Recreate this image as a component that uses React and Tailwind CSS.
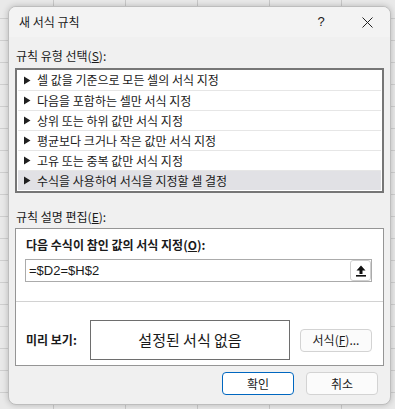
import React from "react";

const KR = { fontFamily: '"Noto Sans CJK KR", "Noto Sans", sans-serif' };

const rows = [
  "셀 값을 기준으로 모든 셀의 서식 지정",
  "다음을 포함하는 셀만 서식 지정",
  "상위 또는 하위 값만 서식 지정",
  "평균보다 크거나 작은 값만 서식 지정",
  "고유 또는 중복 값만 서식 지정",
  "수식을 사용하여 서식을 지정할 셀 결정",
];

function Tri() {
  return (
    <svg width="8" height="9" viewBox="0 0 8 9" className="shrink-0">
      <polygon points="1,0.5 7.5,4.5 1,8.5" fill="#1f1f1f" />
    </svg>
  );
}

export default function App() {
  return (
    <div
      className="w-[395px] h-[409px] overflow-hidden bg-[#e9e9e9] bg-[linear-gradient(to_right,#c9c9c9_1px,transparent_1px),linear-gradient(to_bottom,#cfcfcf_1px,transparent_1px)] bg-[size:72px_22px] bg-[position:53px_18px] pt-[6px] pl-[8px]"
      style={KR}
    >
      <div className="w-[383px] h-[399px] rounded-[8px] border border-[#bdbdbd] bg-[#f0f0f0] shadow-[0_0_6px_rgba(0,0,0,0.22)] flex flex-col overflow-hidden text-[#1a1a1a]">
        {/* title bar */}
        <div className="h-[30px] shrink-0 flex items-center bg-[#f3f3f3]">
          <div className="flex-1 pl-[10px] text-[12px] leading-[16px]">새 서식 규칙</div>
          <div className="w-[46px] flex justify-center text-[13px] leading-[16px] font-bold" style={{ fontFamily: '"Liberation Sans", sans-serif', fontWeight: 400 }}>?</div>
          <div className="w-[46px] flex justify-center">
            <svg width="11" height="11" viewBox="0 0 11 11">
              <path d="M0.5 0.5 L10.5 10.5 M10.5 0.5 L0.5 10.5" stroke="#222" strokeWidth="1" />
            </svg>
          </div>
        </div>

        {/* body */}
        <div className="flex flex-col px-[6px]">
          <div className="mt-[11px] pl-[1px] text-[12px] leading-[16px]">
            규칙 유형 선택(<span className="underline">S</span>):
          </div>
          <div className="mt-[4px] border-2 border-[#767676] bg-white px-[1px] pb-[1px] flex flex-col">
            {rows.map((r, i) => (
              <div
                key={i}
                className={
                  "h-[20px] flex items-center gap-[6px] pl-[5px] text-[12px] leading-[16px] " +
                  (i > 0 ? "border-t border-[#e6e6e6] " : "") +
                  (i === 5 ? "bg-[#e1e1e5]" : "")
                }
              >
                <Tri />
                <span>{r}</span>
              </div>
            ))}
          </div>

          <div className="mt-[16px] pl-[1px] text-[12px] leading-[16px]">
            규칙 설명 편집(<span className="underline">E</span>):
          </div>
          <div className="mt-[3px] border border-[#959595] bg-white flex flex-col pb-[5px]">
            <div className="pt-[8px] pl-[10px] text-[12px] leading-[16px] font-bold">
              다음 수식이 참인 값의 서식 지정(<span className="underline">O</span>):
            </div>
            <div className="mt-[6px] ml-[9px] mr-[11px] h-[23px] border border-[#ababab] flex items-center justify-between pl-[3px] pr-[0px]">
              <span className="text-[13px] leading-[16px]" style={{ fontFamily: '"Liberation Sans", sans-serif' }}>
                =$D2=$H$2
              </span>
              <div className="w-[21px] h-[21px] rounded-[3px] border border-[#cfcfcf] bg-white flex items-center justify-center">
                <svg width="10" height="12" viewBox="0 0 10 12">
                  <path d="M5 0.5 L9.5 5.5 H6.5 V9 H3.5 V5.5 H0.5 Z" fill="#111" />
                  <rect x="0" y="10" width="10" height="1.6" fill="#111" />
                </svg>
              </div>
            </div>
            <div className="mt-[19px] h-px bg-[#d2d2d2]" />
            <div className="mt-[18px] flex items-center">
              <div className="w-[74px] pl-[10px] text-[12px] leading-[16px] font-bold">미리 보기:</div>
              <div className="w-[200px] h-[40px] border border-[#6e6e6e] flex items-center justify-center text-[15px] leading-[20px]">
                설정된 서식 없음
              </div>
              <div className="ml-[10px] w-[72px] h-[23px] rounded-[4px] border border-[#d3d3d3] bg-[#fbfbfb] flex items-center justify-center text-[12px] leading-[16px]">
                서식(<span className="underline">F</span>)...
              </div>
            </div>
          </div>

          <div className="mt-[6px] flex justify-end gap-[12px] pr-[6px]">
            <div className="w-[72px] h-[23px] rounded-[4px] border-[1.5px] border-[#0067c0] bg-white flex items-center justify-center text-[12px] leading-[16px]">
              확인
            </div>
            <div className="w-[72px] h-[23px] rounded-[4px] border border-[#d3d3d3] bg-[#fbfbfb] flex items-center justify-center text-[12px] leading-[16px]">
              취소
            </div>
          </div>
        </div>
      </div>
    </div>
  );
}
